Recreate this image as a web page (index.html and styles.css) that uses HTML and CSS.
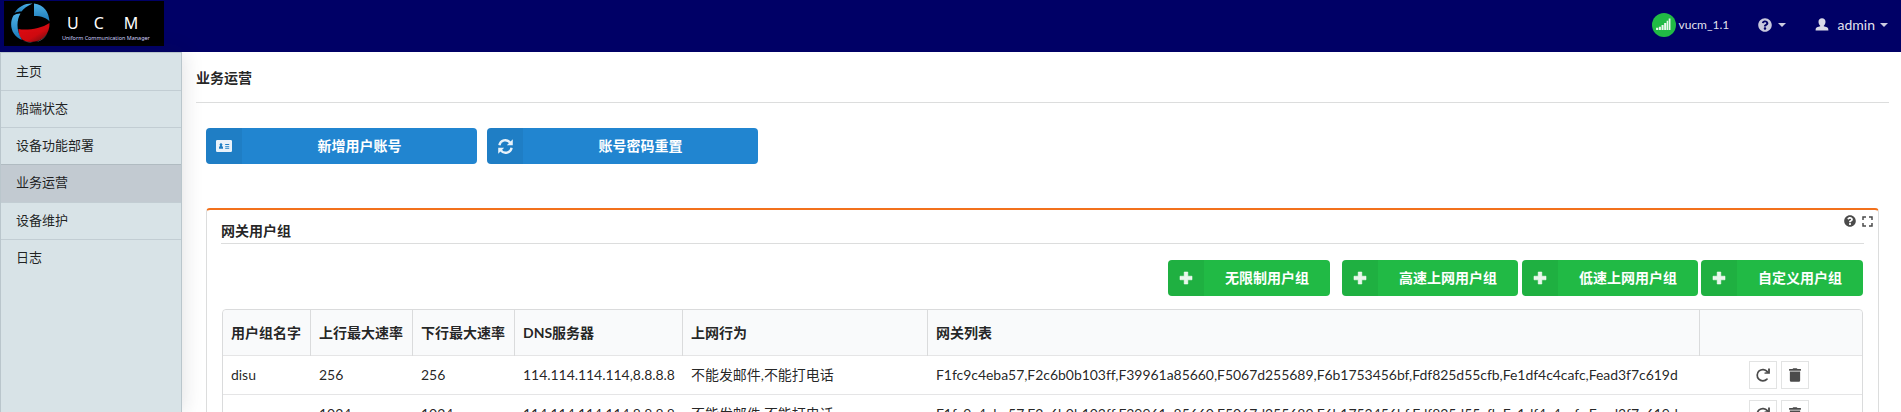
FILE: index.html
```html
<!DOCTYPE html>
<html lang="zh-CN">
<head>
<meta charset="utf-8">
<title>UCM</title>
<link rel="stylesheet" href="styles.css">
</head>
<body>
<svg class="defs" aria-hidden="true">
  <symbol id="i-plus" viewBox="0 0 14 14"><path d="M5.2 1h3.6v4.2H13v3.6H8.800V13H5.200V8.800H1V5.200h4.200z" stroke="currentColor" stroke-width=".6" stroke-linejoin="round"/></symbol>
  <symbol id="i-question" viewBox="0 0 512 512"><path d="M504 256c0 137-111 248-248 248S8 393 8 256 119 8 256 8s248 111 248 248zM262.700 90c-54.500 0-89.300 23-116.500 63.800-3.500 5.300-2.400 12.400 2.700 16.300l34.700 26.300c5.200 3.900 12.600 3 16.700-2.100 17.900-22.700 30.100-35.800 57.300-35.800 20.400 0 45.700 13.100 45.700 33 0 15-12.400 22.700-32.500 34C247 238.500 216 254.900 216 296v4c0 6.600 5.400 12 12 12h56c6.600 0 12-5.400 12-12v-1.300c0-28.500 83.200-29.600 83.200-106.700 0-58-60.200-102-116.500-102zM256 338c-25.400 0-46 20.600-46 46s20.600 46 46 46 46-20.600 46-46-20.600-46-46-46z"/></symbol>
  <symbol id="i-trash" viewBox="0 0 448 512"><path d="M432 32H312l-9.400-18.700A24 24 0 0 0 281.100 0H166.800a23.700 23.700 0 0 0-21.400 13.300L136 32H16A16 16 0 0 0 0 48v32a16 16 0 0 0 16 16h416a16 16 0 0 0 16-16V48a16 16 0 0 0-16-16zM32 464a48 48 0 0 0 48 48h288a48 48 0 0 0 48-48V128H32z"/></symbol>
  <symbol id="i-redo" viewBox="0 0 14 14"><path d="M11 11.200a5.700 5.700 0 1 1 .3-7.600" fill="none" stroke="currentColor" stroke-width="1.700" stroke-linecap="round"/><path d="M13.900.4v5.400H8.500V4.400l3.600-.3V.4z"/></symbol>
</svg>

<header class="topbar">
  <div class="logo">
    <svg class="logo-mark" viewBox="0 0 40 42">
      <defs>
        <linearGradient id="blue" x1="0" y1="0" x2="0" y2="1"><stop offset="0" stop-color="#4db0e4"/><stop offset="1" stop-color="#1b79b8"/></linearGradient>
        <linearGradient id="red" x1="0" y1="0" x2="1" y2="1"><stop offset="0" stop-color="#e20a12"/><stop offset=".6" stop-color="#d00a10"/><stop offset="1" stop-color="#5c1015"/></linearGradient>
      </defs>
      <path d="M8.500 27C16 28.500 31 27 39.500 21 40 31 33 40 21 40 12 40 8 35 8.500 27z" fill="url(#red)"/>
      <path d="M24 1.500c10 1 15 9 15.500 18-2.500-3.500-8-5.500-15.500-5.500z" fill="url(#blue)"/>
      <path d="M4.500 11C8.500 4.500 15 1.300 22.500 1.500 17 4 14 6.500 11.500 9.500 9 9.500 6.500 10 4.500 11z" fill="url(#blue)"/>
      <path d="M3.500 13.500C5.500 12 8 11.300 10.500 11.500 6.500 18 6 29 12 38 1.500 34-1.500 22 3.500 13.500z" fill="url(#blue)"/>
      <path d="M13 39.300c9 2.700 19 1 24.500-8.300-3.500 7-9.500 9.500-16.500 9.300z" fill="#8b9094"/>
    </svg>
    <div class="logo-words">
      <div class="logo-name"><span>U</span><span>C</span><span>M</span></div>
      <div class="logo-sub">Uniform Communication Manager</div>
    </div>
  </div>
  <nav class="top-menu">
    <div class="status">
      <span class="signal"><svg viewBox="0 0 16 14"><path d="M0 10.500h2.300V13H0zM3 9.500h2.200V13H3zM5.900 7.500h2.200V13H5.900zM8.700 5.500h2.200V13H8.700zM11.400 3h1.600v10h-1.600zM13.600.5h1.900V13h-1.900z"/></svg></span>
      <span>vucm_1.1</span>
    </div>
    <div class="help"><svg class="ic-help"><use href="#i-question"/></svg><i class="caret"></i></div>
    <div class="user"><svg class="ic-user" viewBox="0 0 14 13"><path d="M3.500 3.800C3.500 1.500 4.900.3 7 .3s3.500 1.200 3.500 3.500c0 1.700-.7 3.200-1.700 4v.5l3.200.9c1 .4 1.400 1.200 1.400 3.300H.6c0-2.100.4-2.900 1.400-3.300l3.200-.9v-.5c-1-.8-1.700-2.300-1.700-4z"/></svg><span>admin</span><i class="caret"></i></div>
  </nav>
</header>

<div class="body">
  <aside class="sidebar">
    <a class="side-item">主页</a>
    <a class="side-item">船端状态</a>
    <a class="side-item">设备功能部署</a>
    <a class="side-item active">业务运营</a>
    <a class="side-item">设备维护</a>
    <a class="side-item last">日志</a>
  </aside>
  <main class="content">
    <h1 class="page-title">业务运营</h1>
    <div class="actions">
      <button class="btn blue"><span class="btn-icon"><svg class="ic-card" viewBox="0 0 16 12"><path fill-rule="evenodd" d="M1.200 0h13.600Q16 0 16 1.200v9.600q0 1.200-1.200 1.200H1.200Q0 12 0 10.800V1.200Q0 0 1.200 0zM5 3.300a1.300 1.300 0 0 0-.8 2.400L3 7V8.800h4V7L5.800 5.700A1.300 1.300 0 0 0 5 3.300zM9.200 4v.9h4V4zm0 1.900v.9h4v-.9zm0 1.900v.9h4v-.9z"/></svg></span><span class="btn-text">新增用户账号</span></button>
      <button class="btn blue"><span class="btn-icon"><svg class="ic-sync" viewBox="0 0 14 14"><path d="M1.300 5.800A5.600 5.600 0 0 1 11.200 3.300M12.700 8.200A5.600 5.600 0 0 1 2.800 10.700" fill="none" stroke="currentColor" stroke-width="2.200"/><path d="M13.800.3v5.600H8.200zM.2 13.700V8.100h5.600z"/></svg></span><span class="btn-text">账号密码重置</span></button>
    </div>
    <section class="panel">
      <div class="panel-tools">
        <svg class="ic-q"><use href="#i-question"/></svg>
        <svg class="ic-expand" viewBox="0 0 11 11"><path d="M1 4V1h3M7 1h3v3M10 7v3H7M4 10H1V7" fill="none" stroke="currentColor" stroke-width="1.500"/></svg>
      </div>
      <h2 class="panel-title">网关用户组</h2>
      <div class="group-actions">
        <button class="btn green first"><span class="btn-icon"><svg><use href="#i-plus"/></svg></span><span class="btn-text">无限制用户组</span></button>
        <button class="btn green wide"><span class="btn-icon"><svg><use href="#i-plus"/></svg></span><span class="btn-text">高速上网用户组</span></button>
        <button class="btn green wide"><span class="btn-icon"><svg><use href="#i-plus"/></svg></span><span class="btn-text">低速上网用户组</span></button>
        <button class="btn green last"><span class="btn-icon"><svg><use href="#i-plus"/></svg></span><span class="btn-text">自定义用户组</span></button>
      </div>
      <div class="table">
        <div class="row head">
          <div>用户组名字</div><div>上行最大速率</div><div>下行最大速率</div><div>DNS服务器</div><div>上网行为</div><div>网关列表</div><div></div>
        </div>
        <div class="row">
          <div>disu</div><div>256</div><div>256</div><div>114.114.114.114,8.8.8.8</div><div>不能发邮件,不能打电话</div><div>F1fc9c4eba57,F2c6b0b103ff,F39961a85660,F5067d255689,F6b1753456bf,Fdf825d55cfb,Fe1df4c4cafc,Fead3f7c619d</div>
          <div class="ops"><span class="op"><svg class="ic-redo"><use href="#i-redo"/></svg></span><span class="op"><svg class="ic-trash"><use href="#i-trash"/></svg></span></div>
        </div>
        <div class="row">
          <div></div><div>1024</div><div>1024</div><div>114.114.114.114,8.8.8.8</div><div>不能发邮件,不能打电话</div><div>F1fc9c4eba57,F2c6b0b103ff,F39961a85660,F5067d255689,F6b1753456bf,Fdf825d55cfb,Fe1df4c4cafc,Fead3f7c619d</div>
          <div class="ops"><span class="op"><svg class="ic-redo"><use href="#i-redo"/></svg></span><span class="op"><svg class="ic-trash"><use href="#i-trash"/></svg></span></div>
        </div>
      </div>
    </section>
  </main>
</div>
</body>
</html>
```
FILE: styles.css
```css
* { box-sizing: border-box; }
html, body { margin: 0; height: 100%; overflow: hidden; }
body {
  display: flex;
  flex-direction: column;
  height: 412px;
  background: #fff;
  color: rgba(0, 0, 0, .87);
  font: 14px/20px Lato, "Noto Sans CJK SC", sans-serif;
}
svg { display: block; fill: currentColor; }
.defs { display: none; }

.topbar {
  flex: none;
  height: 52px;
  display: flex;
  justify-content: space-between;
  background: #000066;
  color: rgba(255, 255, 255, .9);
}
.logo {
  display: flex;
  width: 160px;
  height: 45px;
  margin: 1px 0 0 4px;
  background: #000;
  color: #fff;
}
.logo-mark { width: 40px; height: 42px; margin: 1px 0 0 6px; }
.logo-words { padding: 10px 0 0 12px; font-family: "Noto Sans", sans-serif; }
.logo-name { display: flex; gap: 15px; padding-left: 5px; font-size: 16px; line-height: 24px; }
.logo-name span:last-child { margin-left: 5px; }
.logo-sub { font-size: 5.450px; line-height: 8px; margin-top: -1px; color: #d5d5ff; white-space: nowrap; }

.top-menu { display: flex; align-items: center; height: 49px; padding-right: 13px; }
.status { display: flex; align-items: center; gap: 3px; font-size: 12px; width: 106px; }
.signal { display: flex; align-items: center; justify-content: center; width: 24px; height: 24px; border-radius: 50%; background: #21ba45; }
.signal svg { width: 15px; height: 13px; }
.help { display: flex; align-items: center; gap: 6px; width: 57px; color: rgba(255, 255, 255, .78); }
.ic-help { width: 14px; height: 14px; }
.user { display: flex; align-items: center; }
.ic-user { width: 14px; height: 13px; margin-right: 9px; color: rgba(255, 255, 255, .85); }
.user .caret { margin-left: 5px; }
.caret { border: 4px solid transparent; border-top-color: rgba(255, 255, 255, .8); border-bottom: 0; }

.body { flex: 1; display: flex; min-height: 0; }
.sidebar {
  flex: none;
  width: 182px;
  padding-top: .6px;
  background: #d8e3e7;
  border: 1px solid #bac6cc;
  border-bottom: 0;
  box-shadow: 0 0 20px rgba(34, 36, 38, .15);
  font-size: 13px;
}
.side-item {
  display: block;
  height: 37.300px;
  line-height: 34px;
  padding-left: 15px;
  border-bottom: 1px solid #c2cdd3;
}
.side-item.active { background: #c2cad1; box-shadow: 0 -1px #b0bbc1; }
.side-item.last { border: 0; }

.content { flex: 1; min-width: 0; padding: 0 12px 0 14px; }
.page-title {
  margin: 0;
  height: 51px;
  padding-top: 16px;
  font-size: 14px;
  line-height: 20px;
  border-bottom: 1px solid #dcdddd;
}
.actions { display: flex; gap: 10px; padding: 25px 0 0 10px; }
.btn {
  display: flex;
  align-items: stretch;
  height: 36px;
  padding: 0;
  border: 0;
  border-radius: 4px;
  overflow: hidden;
  color: #fff;
  font: bold 14px/36px Lato, "Noto Sans CJK SC", sans-serif;
}
.btn-icon { flex: none; display: flex; align-items: center; justify-content: center; width: 36px; background: rgba(0, 0, 0, .05); color: rgba(255, 255, 255, .9); }
.btn-icon svg { width: 14px; height: 14px; }
.btn-icon .ic-card { width: 16px; height: 12px; }
.btn-icon .ic-sync { width: 15px; height: 15px; }
.btn-text { flex: 1; text-align: center; }
.blue { width: 271px; background: #2185d0; }
.green { width: 162px; background: #21ba45; }
.green.wide { width: 176px; }
.green.first { margin-right: 8px; }
.green.last { margin-left: -1px; }

.panel {
  position: relative;
  margin: 44px 10px 0 10px;
  height: 204px;
  padding: 11px 14px 0;
  border: 1px solid #dcdddd;
  border-top: 2px solid #f2711c;
  border-bottom: 0;
  border-radius: 4px 4px 0 0;
  overflow: hidden;
}
.panel-tools { position: absolute; top: 5px; right: 5px; display: flex; align-items: center; gap: 6px; color: #4b4b4b; }
.ic-q { width: 12px; height: 12px; }
.ic-expand { width: 11px; height: 11px; }
.panel-title { margin: 0; height: 23px; font-size: 14px; line-height: 20px; border-bottom: 1px solid #dcdddd; }
.group-actions { display: flex; justify-content: flex-end; gap: 4px; padding: 16px 1px 13px 0; }

.table { margin: 0 1px; border: 1px solid #dadbdc; border-radius: 4px; }
.row {
  display: grid;
  grid-template-columns: 88px 102px 102px 168px 245px 772px 1fr;
  height: 39px;
  line-height: 38px;
  letter-spacing: -.045px;
  border-bottom: 1px solid #e5e5e6;
}
.row > div { padding-left: 8px; white-space: nowrap; }
.head { height: 46px; line-height: 46px; letter-spacing: 0; background: #f9fafb; border-radius: 4px 4px 0 0; font-weight: bold; }
.head > div { padding-left: 8px; border-right: 1px solid #dadbdc; }
.head > div:last-child { border: 0; }
.row > .ops { display: flex; gap: 4px; padding: 5px 0 0 49px; }
.op { display: flex; align-items: center; justify-content: center; width: 28px; height: 28px; border: 1px solid #e2e3e3; color: #4b4b4b; }
.ic-redo { width: 14px; height: 14px; }
.ic-trash { width: 12px; height: 14px; }
```
